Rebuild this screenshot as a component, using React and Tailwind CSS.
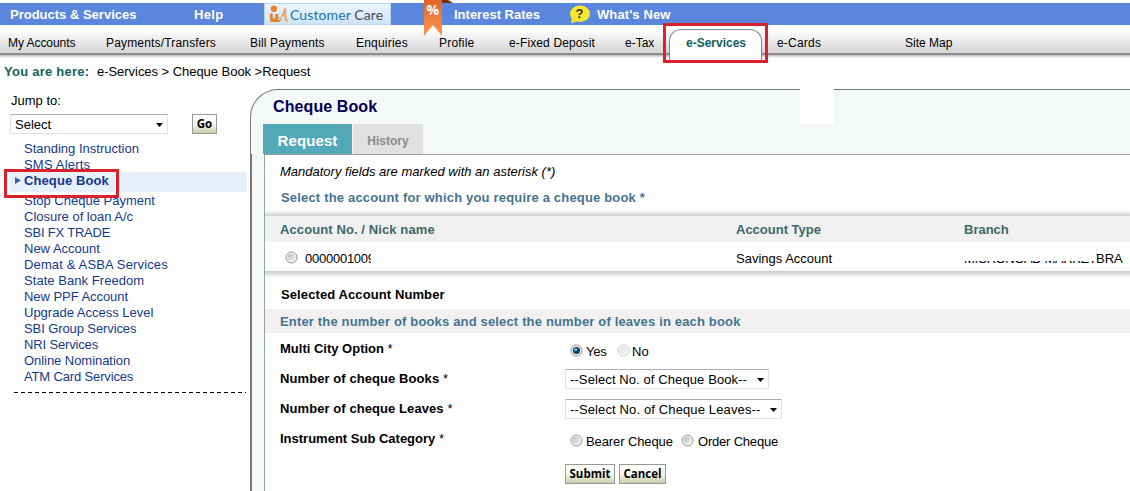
import React from "react";

const topText = "pt-px text-[13px] leading-[22px] font-bold text-white whitespace-nowrap";

const menu = [
  { label: "My Accounts", style: "w-[98px] tracking-[-0.05px]" },
  { label: "Payments/Transfers", style: "w-[144px] tracking-[0.17px]" },
  { label: "Bill Payments", style: "w-[106px] tracking-[0.15px]" },
  { label: "Enquiries", style: "w-[83px] tracking-[0.2px]" },
  { label: "Profile", style: "w-[70px] tracking-[0.2px]" },
  { label: "e-Fixed Deposit", style: "w-[116px] tracking-[0.13px]" },
  { label: "e-Tax", style: "w-[44px]" },
];

const linksAbove = [{ label: "Standing Instruction" }, { label: "SMS Alerts", style: "tracking-[0.2px]" }];

const linksBelow = [
  { label: "Stop Cheque Payment" },
  { label: "Closure of loan A/c" },
  { label: "SBI FX TRADE", style: "tracking-[-0.2px]" },
  { label: "New Account" },
  { label: "Demat & ASBA Services", style: "tracking-[0.14px]" },
  { label: "State Bank Freedom", style: "tracking-[0.05px]" },
  { label: "New PPF Account", style: "tracking-[-0.05px]" },
  { label: "Upgrade Access Level" },
  { label: "SBI Group Services", style: "tracking-[-0.1px]" },
  { label: "NRI Services", style: "tracking-[-0.15px]" },
  { label: "Online Nomination", style: "tracking-[-0.05px]" },
  { label: "ATM Card Services", style: "tracking-[-0.15px]" },
];

const CareIcon = () => (
  <svg width="20" height="18" viewBox="0 0 20 18" className="shrink-0">
    <circle cx="4.8" cy="3.8" r="3.2" fill="#e9822a" />
    <path d="M2.2 8.5v3.8q0 2.7 3 2.7h2.6V9" fill="none" stroke="#e9822a" strokeWidth="3" />
    <path d="M1.5 16h9.5" stroke="#e9822a" strokeWidth="2" />
    <path d="M16 3.5q-.5 4.500-3.500 8.500M16.300 3.500v8q0 4 2.200 5M10.500 12.500l2 3" fill="none" stroke="#eaa266" strokeWidth="2" />
  </svg>
);

const Ribbon = () => (
  <svg width="30" height="36" viewBox="0 0 30 36" className="absolute left-[424px] top-0">
    <defs>
      <linearGradient id="ribbon" x1="0" y1="0" x2="0" y2="1">
        <stop offset="0" stopColor="#e2632a" />
        <stop offset="1" stopColor="#f8994f" />
      </linearGradient>
    </defs>
    <path d="M18 0h6l5 3H18z" fill="#762f0a" />
    <path d="M0 0h18v36l-9-11-9 11z" fill="url(#ribbon)" />
    <text x="8.700" y="15" textAnchor="middle" fontSize="14" fontWeight="700" fill="#fff" fontFamily="Open Sans, sans-serif">
      %
    </text>
  </svg>
);

const Bubble = () => (
  <svg width="22" height="20" viewBox="0 0 22 20" className="absolute left-[569px] top-[5px]">
    <path d="M3 12l-1 6.500 8-3z" fill="#f7e62c" />
    <ellipse cx="11" cy="8.700" rx="10" ry="8.200" fill="#f7e62c" />
    <text x="10.500" y="13.200" textAnchor="middle" fontSize="13" fontWeight="700" fill="#333" fontFamily="Liberation Sans, sans-serif">
      ?
    </text>
  </svg>
);

const Radio = ({ checked, faded }) => (
  <svg width="13" height="13" viewBox="0 0 13 13" className="shrink-0">
    <defs>
      <linearGradient id="radioFill" x1="0" y1="0" x2="1" y2="1">
        <stop offset="0" stopColor="#b9bcc0" />
        <stop offset="1" stopColor="#f4f4f4" />
      </linearGradient>
    </defs>
    <g opacity={faded ? 0.5 : 1}>
      <circle cx="6.500" cy="6.500" r="5.500" fill="#fafafa" stroke="#8e8f8f" />
      <circle cx="6.500" cy="6.500" r="4" fill="url(#radioFill)" />
    </g>
    {checked && (
      <>
        <circle cx="6.500" cy="6.500" r="3.600" fill="#174766" />
        <circle cx="5.700" cy="5.700" r="1.400" fill="#7cc7e8" />
      </>
    )}
  </svg>
);

const Select = ({ label, className }) => (
  <div
    className={`flex items-center justify-between h-5 px-1 border border-[#dfe2e6] border-t-[#abadb3] rounded-[1px] bg-white text-[13px] leading-[18px] ${className}`}
  >
    <span className="pt-px whitespace-nowrap">{label}</span>
    <svg width="7" height="4" viewBox="0 0 7 4" className="shrink-0 mt-[2px]">
      <path d="M0 0h7L3.500 4z" fill="#000" />
    </svg>
  </div>
);

const Button = ({ children, className }) => (
  <button
    className={`h-5 border border-[#999] bg-linear-to-b from-white via-[#f8f8f2] to-[#cccca8] font-['Open_Sans',sans-serif] font-bold text-[11.5px] leading-[16px] text-black ${className}`}
  >
    {children}
  </button>
);

const FieldLabel = ({ children, className }) => (
  <div className={`w-[285px] leading-[20px] font-bold whitespace-nowrap ${className}`}>
    {children} <span className="font-normal">*</span>
  </div>
);

const TopBar = () => (
  <div className="relative z-10 pt-[3px]">
    <div className="flex h-[22px] bg-[#5a86dd]">
      <div className={`w-[184px] pl-[10px] ${topText}`}>Products &amp; Services</div>
      <div className={`w-[80px] pl-[10px] tracking-[0.3px] ${topText}`}>Help</div>
      <div className="flex items-center w-[127px] h-[22px] pl-1 bg-linear-to-b from-[#eef6fe] to-[#cfe4f8] border border-[#b7d4f2]">
        <CareIcon />
        <span className="pl-px font-['Lato',sans-serif] text-[14px] tracking-[0.1px] text-[#1977ad] whitespace-nowrap">
          Customer <span className="text-[#454a55]">Care</span>
        </span>
      </div>
      <div className={`w-[143px] pl-[63px] ${topText}`}>Interest Rates</div>
      <div className={`pl-[63px] tracking-[0.1px] ${topText}`}>What's New</div>
    </div>
    <Ribbon />
    <Bubble />
  </div>
);

const MenuBar = () => (
  <div className="relative flex h-[32px] pl-2 text-xs leading-[36px] bg-linear-to-b from-white from-15% to-[#d3d3d3] to-90%">
    <div className="absolute inset-x-0 top-[28px] h-[2px] bg-[#8d8d8d]" />
    <div className="absolute inset-x-0 top-[30px] h-[3px] bg-linear-to-b from-[#bcbcbc] to-white" />
    {menu.map((item) => (
      <div key={item.label} className={`shrink-0 whitespace-nowrap ${item.style}`}>
        {item.label}
      </div>
    ))}
    <div className="relative z-10 w-[93px] h-[33px] mt-[4px] shrink-0 rounded-t-[12px] border border-b-0 border-[#888] bg-white pl-4 font-bold leading-[26px] text-[#12625f] whitespace-nowrap">
      e-Services
    </div>
    <div className="w-[143px] pl-[15px] shrink-0 tracking-[0.2px]">e-Cards</div>
    <div>Site Map</div>
    <div className="absolute z-20 left-[663px] top-[-2px] w-[105px] h-[40px] border-3 border-[#d9222c]" />
  </div>
);

const Sidebar = () => (
  <div className="w-[250px] shrink-0 text-[13px] text-[#143a8c]">
    <div className="pl-[11px] pt-[4px] leading-4 text-black">Jump to:</div>
    <div className="flex pl-[10px] pt-[5px] text-black">
      <Select label="Select" className="w-[158px]" />
      <Button className="w-[25px] ml-[24px]">Go</Button>
    </div>
    <div className="pl-6 pt-[7px]">
      {linksAbove.map((link) => (
        <div key={link.label} className={`h-4 leading-4 ${link.style ?? ""}`}>{link.label}</div>
      ))}
    </div>
    <div className="relative flex items-center w-[237px] h-5 ml-[10px] -mt-px pl-[5px] bg-[#e6f0fa] font-bold">
      <svg width="6" height="7" viewBox="0 0 6 7" className="mb-[3px]">
        <path d="M0 0l6 3.500L0 7z" fill="#41609e" />
      </svg>
      <span className="pl-[3px] leading-4 pb-[3px] tracking-[0.1px]">Cheque Book</span>
      <div className="absolute left-[-6px] top-[-3px] w-[115px] h-[29px] border-3 border-[#d9222c]" />
    </div>
    <div className="pl-6 pt-[1px]">
      {linksBelow.map((link) => (
        <div key={link.label} className={`h-4 leading-4 ${link.style ?? ""}`}>{link.label}</div>
      ))}
    </div>
    <div className="h-px w-[232px] ml-[14px] mt-[7px] bg-[repeating-linear-gradient(90deg,#000_0_4px,transparent_4px_7px)]" />
  </div>
);

const Accounts = () => (
  <>
    <div className="h-[6px] mt-[3px] bg-linear-to-b from-white to-[#cfcfcf]" />
    <div className="flex h-[26px] pl-[15px] bg-[#f0f0f0] font-bold leading-[28px] text-[#3f6868] whitespace-nowrap">
      <div className="w-[456px] tracking-[0.1px]">Account No. / Nick name</div>
      <div className="w-[228px]">Account Type</div>
      <div>Branch</div>
    </div>
    <div className="flex h-[29px] pl-5 leading-[34px] whitespace-nowrap">
      <div className="flex w-[451px]">
        <div className="pt-[9px]"><Radio /></div>
        <div className="relative ml-[7px] tracking-[-0.25px]">
          0000001009
          {/* masks the tail of the account number */}
          <div className="absolute right-[-1px] top-[6px] w-[5px] h-[20px] bg-white" />
        </div>
      </div>
      <div className="w-[228px]">Savings Account</div>
      <div className="flex">
        <div className="relative w-[132px] tracking-[-0.4px]">
          MICRONOAD MARKET
          {/* masks the branch name */}
          <div className="absolute left-0 top-[6px] w-[132px] h-[13px] bg-white" />
        </div>
        <span>BRA</span>
      </div>
    </div>
    <div className="h-[7px] bg-linear-to-b from-[#c8c8c8] to-white" />
  </>
);

const Panel = () => (
  <div className="relative flex-1 min-w-0 h-[402px] rounded-tl-[28px] border-t border-l border-[#777] bg-[#f4f8f9] pl-px">
    <div className="absolute left-[-1px] top-[64px] bottom-0 w-[2px] bg-[#777]" />
    <div className="absolute left-[549px] top-[-1px] w-[34px] h-[35px] bg-white" />
    <h1 className="pl-[21px] pt-[7px] h-[34px] text-base leading-[20px] font-bold tracking-[0.1px] text-[#000059]">
      Cheque Book
    </h1>
    <div className="flex h-[30px] pl-[11px] font-bold text-center">
      <div className="w-[89px] mr-px bg-[#53a9b8] text-white text-[15px] leading-[34px] tracking-[0.1px]">Request</div>
      <div className="w-[70px] bg-[#e1e1e1] text-[#8b8b8b] text-xs leading-[35px]">History</div>
    </div>
    <div className="ml-[12px] h-[337px] border-t border-l border-[#9a9fa2] bg-white text-[13px] text-black">
      <p className="pl-[15px] pt-[8px] leading-[18px] italic whitespace-nowrap">
        Mandatory fields are marked with an asterisk (*)
      </p>
      <p className="pl-4 pt-[8px] leading-[18px] font-bold tracking-[0.18px] text-[#457491] whitespace-nowrap">
        Select the account for which you require a cheque book *
      </p>
      <Accounts />
      <p className="pl-4 pt-[8px] h-[31px] leading-[18px] font-bold tracking-[0.1px] whitespace-nowrap">
        Selected Account Number
      </p>
      <p className="h-[24px] pl-[15px] bg-[#f2f0f0] leading-[25px] font-bold tracking-[0.16px] text-[#457491] whitespace-nowrap">
        Enter the number of books and select the number of leaves in each book
      </p>
      <div className="pl-[15px]">
        <div className="flex h-[34px] pt-[6px]">
          <FieldLabel>Multi City Option</FieldLabel>
          <div className="flex pl-[5px] leading-[25px]">
            <div className="pt-[5px]"><Radio checked /></div>
            <span className="w-[34px] pl-[3px] tracking-[-0.2px]">Yes</span>
            <div className="pt-[5px]"><Radio faded /></div>
            <span className="pl-[2px]">No</span>
          </div>
        </div>
        <div className="flex h-[30px] pt-[2px]">
          <FieldLabel className="tracking-[0.08px]">Number of cheque Books</FieldLabel>
          <Select label="--Select No. of Cheque Book--" className="w-[204px] tracking-[0.1px]" />
        </div>
        <div className="flex h-[30px] pt-[2px]">
          <FieldLabel className="tracking-[0.08px]">Number of cheque Leaves</FieldLabel>
          <Select label="--Select No. of Cheque Leaves--" className="w-[217px] tracking-[0.13px]" />
        </div>
        <div className="flex h-[37px] pt-[2px]">
          <FieldLabel>Instrument Sub Category</FieldLabel>
          <div className="flex pl-[5px] leading-[25px] whitespace-nowrap">
            <div className="pt-[5px]"><Radio /></div>
            <span className="w-[98px] pl-[3px] tracking-[-0.1px]">Bearer Cheque</span>
            <div className="pt-[5px]"><Radio /></div>
            <span className="pl-[4px] tracking-[-0.2px]">Order Cheque</span>
          </div>
        </div>
        <div className="flex gap-1 pl-[285px]">
          <Button className="w-[50px]">Submit</Button>
          <Button className="w-[47px]">Cancel</Button>
        </div>
      </div>
    </div>
  </div>
);

const App = () => (
  <div className="w-[1130px] h-[491px] overflow-hidden bg-white font-['Liberation_Sans',Arial,sans-serif] text-black">
    <TopBar />
    <MenuBar />
    <div className="flex h-[32px] pl-1 text-[13px] leading-[29px] whitespace-nowrap">
      <span className="w-[93px] font-bold tracking-[0.25px] text-[#12625f]">You are here:</span>
      <span className="tracking-[-0.04px]">e-Services &gt; Cheque Book &gt;Request</span>
    </div>
    <div className="flex">
      <Sidebar />
      <Panel />
    </div>
  </div>
);

export default App;
